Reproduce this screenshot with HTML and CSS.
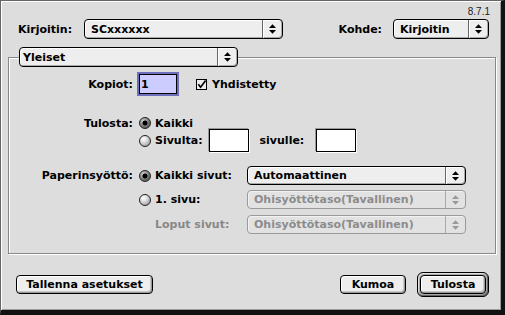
FILE: index.html
```html
<!DOCTYPE html>
<html>
<head>
<meta charset="utf-8">
<title>Tulosta</title>
<link rel="stylesheet" href="styles.css">
</head>
<body>
<div class="window">
  <div class="version">8.7.1</div>
  <div class="toprow">
    <span class="lbl first">Kirjoitin:</span>
    <div class="popup w-printer"><span class="ptext">SCxxxxxx</span><span class="parrow"><svg width="7" height="10" viewBox="0 0 7 10"><path d="M0 4 L3.5 0.3 L7 4Z M0 6 L3.5 9.7 L7 6Z" fill="#000"/></svg></span></div>
    <span class="lbl kohde">Kohde:</span>
    <div class="popup w-dest"><span class="ptext">Kirjoitin</span><span class="parrow"><svg width="7" height="10" viewBox="0 0 7 10"><path d="M0 4 L3.5 0.3 L7 4Z M0 6 L3.5 9.7 L7 6Z" fill="#000"/></svg></span></div>
  </div>
  <div class="group">
    <div class="popup tab"><span class="ptext tabtext">Yleiset</span><span class="parrow"><svg width="7" height="10" viewBox="0 0 7 10"><path d="M0 4 L3.5 0.3 L7 4Z M0 6 L3.5 9.7 L7 6Z" fill="#000"/></svg></span></div>
    <div class="row copies">
      <span class="flabel">Kopiot:</span>
      <span class="focus"><span class="selfield">1</span></span>
      <svg class="check" width="11" height="11" viewBox="0 0 11 11"><rect x="0.5" y="0.5" width="10" height="10" fill="#eeeeee" stroke="#000"/><path d="M2.3 5.2 L4.6 8.2 L9.6 1.6" fill="none" stroke="#000" stroke-width="1.7"/></svg>
      <span class="ctext">Yhdistetty</span>
    </div>
    <div class="row printall">
      <span class="flabel">Tulosta:</span>
      <span class="radio on"></span>
      <span class="rtext">Kaikki</span>
    </div>
    <div class="row range">
      <span class="flabel"></span>
      <span class="radio"></span>
      <span class="rtext from">Sivulta:</span>
      <span class="box"></span>
      <span class="to">sivulle:</span>
      <span class="box"></span>
    </div>
    <div class="row paper">
      <span class="flabel">Paperinsyöttö:</span>
      <span class="radio on"></span>
      <span class="ptxt">Kaikki sivut:</span>
      <div class="popup w-tray"><span class="ptext">Automaattinen</span><span class="parrow"><svg width="7" height="10" viewBox="0 0 7 10"><path d="M0 4 L3.5 0.3 L7 4Z M0 6 L3.5 9.7 L7 6Z" fill="#000"/></svg></span></div>
    </div>
    <div class="row paper paper2">
      <span class="flabel"></span>
      <span class="radio"></span>
      <span class="ptxt">1. sivu:</span>
      <div class="popup w-tray disabled"><span class="ptext">Ohisyöttötaso(Tavallinen)</span><span class="parrow"><svg width="7" height="10" viewBox="0 0 7 10"><path d="M0 4 L3.5 0.3 L7 4Z M0 6 L3.5 9.7 L7 6Z" fill="#999"/></svg></span></div>
    </div>
    <div class="row paper paper3">
      <span class="flabel"></span>
      <span class="rspace"></span>
      <span class="ptxt dim">Loput sivut:</span>
      <div class="popup w-tray disabled"><span class="ptext">Ohisyöttötaso(Tavallinen)</span><span class="parrow"><svg width="7" height="10" viewBox="0 0 7 10"><path d="M0 4 L3.5 0.3 L7 4Z M0 6 L3.5 9.7 L7 6Z" fill="#999"/></svg></span></div>
    </div>
  </div>
  <div class="buttons">
    <span class="btn save">Tallenna asetukset</span>
    <span class="btn cancel">Kumoa</span>
    <span class="ring"><span class="btn">Tulosta</span></span>
  </div>
</div>
</body>
</html>
```
FILE: styles.css
```css
html, body {
  margin: 0;
  padding: 0;
}
body {
  width: 505px;
  height: 315px;
  overflow: hidden;
  background: #dddddd;
  font-family: "DejaVu Sans", Verdana, sans-serif;
  font-weight: bold;
  font-size: 11px;
  color: #000;
}
.window {
  box-sizing: border-box;
  width: 505px;
  height: 315px;
  background: #dddddd;
  border-style: solid;
  border-color: #666 #111 #111 #666;
  border-width: 1px 4px 5px 1px;
  box-shadow: inset 1px 1px 0 #fff, inset -1px -1px 0 #999;
}
.version {
  height: 18px;
  box-sizing: border-box;
  padding: 5px 11px 0 0;
  text-align: right;
  font-family: "Liberation Sans", Arial, sans-serif;
  font-weight: normal;
  font-size: 10px;
  line-height: 12px;
  color: #222;
}
.toprow {
  display: flex;
  align-items: center;
  height: 20px;
  padding: 0 12px 0 17px;
}
.lbl {
  white-space: nowrap;
  flex: none;
}
.lbl.first {
  width: 66px;
}
.lbl.kohde {
  margin-left: auto;
  margin-right: 11px;
}
.popup {
  display: flex;
  box-sizing: border-box;
  height: 20px;
  border: 1px solid #000;
  border-radius: 4px;
  background: #eeeeee;
  box-shadow: inset 1px 1px 0 #fff, inset -1px -1px 0 #aaa;
  flex: none;
}
.ptext {
  flex: 1;
  display: flex;
  align-items: center;
  padding-left: 6px;
  white-space: nowrap;
  overflow: hidden;
}
.parrow {
  width: 19px;
  flex: none;
  display: flex;
  align-items: center;
  justify-content: center;
  border-left: 1px solid #666;
  box-shadow: inset 1px 0 0 #fff;
}
.w-printer {
  width: 199px;
}
.w-dest {
  width: 96px;
}
.group {
  box-sizing: border-box;
  width: 488px;
  margin: 18px 0 0 7px;
  border: 1px solid #888;
  box-shadow: inset 1px 1px 0 #fff, 1px 1px 0 #fff;
  padding: 0 0 19px 10px;
}
.tab {
  width: 219px;
  margin-top: -11px;
}
.tabtext {
  padding-left: 3px;
}
.row {
  display: flex;
  align-items: center;
  white-space: nowrap;
}
.flabel {
  width: 114px;
  flex: none;
  text-align: right;
  margin-right: 6px;
}
.copies {
  height: 24px;
  margin-top: 5px;
}
.copies .flabel {
  margin-right: 4px;
}
.focus {
  box-sizing: border-box;
  width: 42px;
  height: 24px;
  border: 2px solid #6e6ebe;
  display: flex;
  flex: none;
}
.selfield {
  flex: 1;
  display: flex;
  align-items: center;
  border: 1px solid #000;
  background: #ccccff;
  padding-left: 1px;
}
.check {
  margin-left: 17px;
  flex: none;
}
.ctext {
  margin-left: 5px;
}
.printall {
  height: 12px;
  margin-top: 21px;
}
.range {
  height: 23px;
}
.radio {
  width: 12px;
  height: 12px;
  box-sizing: border-box;
  border-radius: 50%;
  border: 1px solid #222;
  margin-right: 4px;
  flex: none;
  background: radial-gradient(circle at 35% 30%, #fff 0, #e4e4e4 30%, #8a8a8a 100%);
}
.radio.on {
  background: radial-gradient(circle, #000 0, #000 2.2px, transparent 2.8px),
              radial-gradient(circle at 35% 30%, #d0d0d0 0, #777 55%, #444 100%);
}
.rspace {
  width: 12px;
  margin-right: 4px;
  flex: none;
}
.from {
  margin-right: 6px;
}
.box {
  box-sizing: border-box;
  width: 40px;
  height: 23px;
  flex: none;
  background: #fff;
  border: 1px solid #000;
  box-shadow: -1px -1px 0 #999, 1px 1px 0 #fff;
}
.to {
  margin: 0 12px 0 11px;
}
.paper {
  height: 19px;
  margin-top: 14px;
}
.paper2 {
  margin-top: 5px;
}
.paper3 {
  margin-top: 6px;
}
.ptxt {
  width: 92px;
  flex: none;
}
.dim {
  color: #888;
}
.w-tray {
  width: 219px;
  height: 19px;
}
.popup.disabled {
  color: #8c8c8c;
  border-color: #9a9a9a;
  background: #e2e2e2;
  box-shadow: inset 1px 1px 0 #f2f2f2;
}
.popup.disabled .parrow {
  border-left-color: #aaa;
  box-shadow: none;
}
.buttons {
  display: flex;
  align-items: center;
  height: 25px;
  margin-top: 18px;
  padding: 0 12px 0 15px;
}
.btn {
  box-sizing: border-box;
  height: 19px;
  display: flex;
  align-items: center;
  justify-content: center;
  border: 1px solid #000;
  border-radius: 4px;
  background: #eeeeee;
  box-shadow: inset 1px 1px 0 #fff, inset -1px -1px 0 #999, inset -2px -2px 0 #c8c8c8;
  white-space: nowrap;
  flex: none;
}
.save {
  width: 137px;
}
.cancel {
  width: 66px;
  margin-left: auto;
}
.ring {
  box-sizing: border-box;
  width: 72px;
  height: 25px;
  margin-left: 11px;
  padding: 2px;
  border: 1px solid #000;
  border-radius: 6px;
  background: #a8a8a8;
  box-shadow: inset 1px 1px 0 #e0e0e0, inset -1px -1px 0 #666;
  display: flex;
  flex: none;
}
.ring .btn {
  width: 100%;
  height: 100%;
}
```
